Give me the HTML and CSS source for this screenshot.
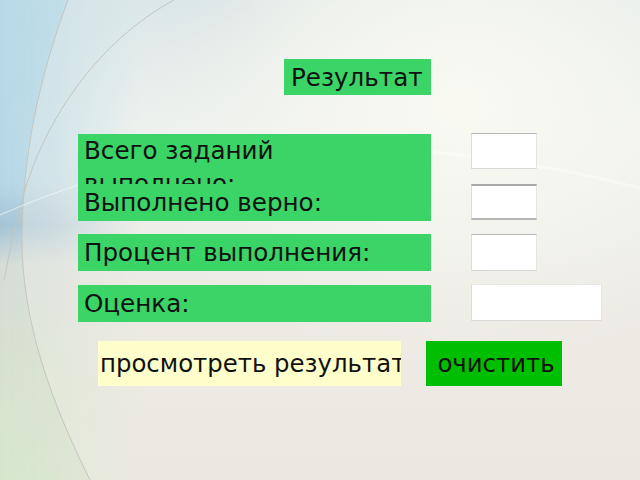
FILE: index.html
```html
<!DOCTYPE html>
<html lang="ru">
<head>
<meta charset="utf-8">
<title>Результат</title>
<link rel="stylesheet" href="styles.css">
</head>
<body>
<div class="slide">
  <svg class="backdrop" width="640" height="480" viewBox="0 0 640 480" aria-hidden="true">
    <defs>
      <linearGradient id="base" x1="0" y1="0" x2="0" y2="1">
        <stop offset="0" stop-color="#dce9ec"/>
        <stop offset="0.3" stop-color="#eef4f2"/>
        <stop offset="0.6" stop-color="#ebe8e0"/>
        <stop offset="1" stop-color="#e9e4dc"/>
      </linearGradient>
      <radialGradient id="glow" cx="0.72" cy="0.22" r="0.55">
        <stop offset="0" stop-color="#fefef6"/>
        <stop offset="0.5" stop-color="#f6f8f0" stop-opacity="0.8"/>
        <stop offset="1" stop-color="#f0f0ea" stop-opacity="0"/>
      </radialGradient>
      <linearGradient id="leftcol" x1="0" y1="0" x2="0" y2="1">
        <stop offset="0" stop-color="#b4d8e6"/>
        <stop offset="0.38" stop-color="#b0d4e4"/>
        <stop offset="0.47" stop-color="#9cc0d4"/>
        <stop offset="0.55" stop-color="#d2dcd6"/>
        <stop offset="0.8" stop-color="#d4e2cc"/>
        <stop offset="1" stop-color="#d4e8cc"/>
      </linearGradient>
      <linearGradient id="fadeX" x1="0" y1="0" x2="1" y2="0">
        <stop offset="0" stop-color="#fff" stop-opacity="1"/>
        <stop offset="0.35" stop-color="#fff" stop-opacity="0.8"/>
        <stop offset="1" stop-color="#fff" stop-opacity="0"/>
      </linearGradient>
      <mask id="leftmask" maskUnits="userSpaceOnUse" x="0" y="0" width="640" height="480">
        <rect x="0" y="0" width="140" height="480" fill="url(#fadeX)"/>
      </mask>
      <radialGradient id="topblue" cx="0.35" cy="0" r="0.5">
        <stop offset="0" stop-color="#c4dae2"/>
        <stop offset="1" stop-color="#e4eef0" stop-opacity="0"/>
      </radialGradient>
    </defs>
    <rect width="640" height="480" fill="url(#base)"/>
    <rect width="640" height="300" fill="url(#topblue)"/>
    <rect width="640" height="480" fill="url(#glow)"/>
    <rect x="0" y="0" width="140" height="480" fill="url(#leftcol)" mask="url(#leftmask)" opacity="0.9"/>
    <path d="M68 0 C38 80 22 160 22 240 C22 320 50 400 90 480 H640 V0 Z" fill="#f2f2ec" opacity="0.35"/>
    <path d="M68 0 C38 80 22 160 22 240 C22 320 50 400 90 480" fill="none" stroke="#c6c6be" stroke-width="1"/>
    <path d="M174 0 C100 40 40 120 18 215 C12 240 8 260 4 280" fill="none" stroke="#c4c6c0" stroke-width="1"/>
    <path d="M0 215 C30 202 60 190 95 180" fill="none" stroke="#ffffff" stroke-width="1.2" opacity="0.5"/>
    <path d="M430 152 C510 160 580 172 640 188" fill="none" stroke="#ffffff" stroke-width="3" opacity="0.4"/>
  </svg>

  <div class="content">
    <div class="title">Результат</div>

    <div class="rows">
      <div class="label label-tall"><span>Всего заданий выполнено:</span></div>
      <div class="value value-top"></div>

      <div class="label">Выполнено верно:</div>
      <div class="value value-dark"></div>

      <div class="label label-gap">Процент выполнения:</div>
      <div class="value value-gap"></div>

      <div class="label label-gap2">Оценка:</div>
      <div class="value value-wide value-gap2"></div>
    </div>

    <div class="buttons">
      <div class="btn btn-view">просмотреть результат</div>
      <div class="btn btn-clear">очистить</div>
    </div>
  </div>
</div>
</body>
</html>
```
FILE: styles.css
```css
html, body {
  margin: 0;
  padding: 0;
}

body {
  font-family: "DejaVu Sans", Verdana, sans-serif;
  color: #111;
}

.slide {
  position: relative;
  width: 640px;
  height: 480px;
  overflow: hidden;
}

.backdrop {
  position: absolute;
  left: 0;
  top: 0;
  display: block;
}

.content {
  position: relative;
  display: flex;
  flex-direction: column;
  padding-top: 59px;
}

.title {
  margin-left: 284px;
  width: 147px;
  height: 36px;
  box-sizing: border-box;
  background: #3bd466;
  font-size: 24.6px;
  line-height: 28.6px;
  padding: 5px 0 0 7px;
  white-space: nowrap;
  overflow: hidden;
}

.rows {
  margin-top: 39px;
  margin-left: 78px;
  display: grid;
  grid-template-columns: 353px auto;
  column-gap: 40px;
  align-items: start;
}

.label {
  background: #3bd466;
  height: 37px;
  box-sizing: border-box;
  padding: 5px 0 0 6px;
  font-size: 24.6px;
  line-height: 28.6px;
  overflow: hidden;
  white-space: nowrap;
}

.label-tall {
  height: 50px;
  padding-top: 0;
  white-space: normal;
}

.label-tall span {
  display: block;
  line-height: 33px;
  width: 300px;
}

.label-gap {
  margin-top: 13px;
}

.label-gap2 {
  margin-top: 14px;
}

.value {
  width: 66px;
  height: 36px;
  box-sizing: border-box;
  background: #ffffff;
  border-top: 1px solid #b8b8b8;
  border-left: 1px solid #dcdcdc;
  border-right: 1px solid #e4e4e4;
  border-bottom: 1px solid #d8d8d8;
}

.value-top {
  margin-top: -1px;
}

.value-dark {
  border-top: 2px solid #a8a8a8;
  border-bottom: 2px solid #b4b4b4;
}

.value-gap {
  margin-top: 13px;
  height: 37px;
}

.value-gap2 {
  margin-top: 13px;
  height: 37px;
}

.value-wide {
  width: 131px;
  border-top-color: #e8e8e8;
}

.buttons {
  margin-top: 19px;
  display: flex;
  gap: 25px;
  margin-left: 98px;
}

.btn {
  height: 45px;
  box-sizing: border-box;
  font-size: 24.4px;
  line-height: 45px;
  white-space: nowrap;
  overflow: hidden;
}

.btn-view {
  width: 303px;
  background: #ffffcc;
  padding-left: 2px;
}

.btn-clear {
  width: 136px;
  background: #00bf00;
  text-align: center;
  padding-left: 4px;
}
```
